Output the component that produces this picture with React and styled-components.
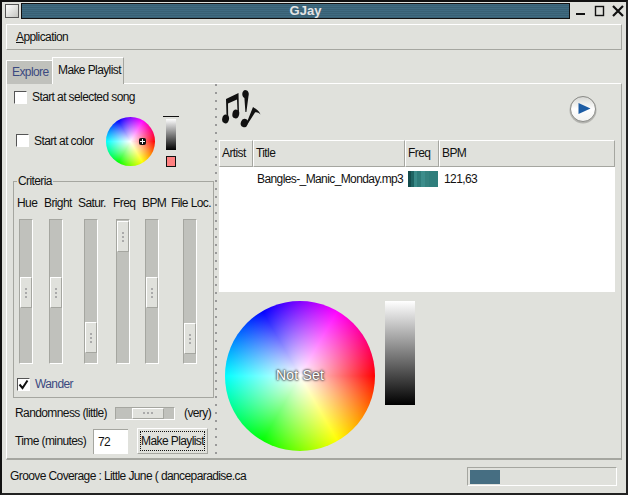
import React from 'react'
import styled, { createGlobalStyle } from 'styled-components'

const Global = createGlobalStyle`
  html, body {
    margin: 0;
    padding: 0;
    background: #e0e1dc;
  }
  body {
    font-family: "Liberation Sans", Arial, sans-serif;
    font-size: 12px;
    letter-spacing: -0.6px;
    color: #111;
  }
`

const Win = styled.div`
  width: 628px;
  height: 495px;
  box-sizing: border-box;
  border-top: 2px solid #111;
  border-left: 2px solid #111;
  border-right: 2px solid #222;
  border-bottom: 2px solid #222;
  background: #e0e1dc;
  display: flex;
  flex-direction: column;
  overflow: hidden;
`

const TitleBar = styled.div`
  height: 17px;
  display: flex;
  align-items: center;
  padding-left: 3px;
  flex: none;
`

const WinMenuBtn = styled.div`
  width: 12px;
  height: 12px;
  background: linear-gradient(135deg, #fff, #c4c5c0);
  border: 1px solid #555;
`

const TitleText = styled.div`
  flex: none;
  width: 549px;
  height: 16px;
  margin-left: 2px;
  padding-left: 20px;
  box-sizing: border-box;
  border: 1px solid #111;
  background: repeating-linear-gradient(180deg, #3f6a80 0 1px, #386074 1px 2px);
  color: #e4e4e4;
  font-weight: bold;
  font-size: 13px;
  letter-spacing: 0;
  line-height: 14px;
  text-align: center;
`

const WinBtns = styled.div`
  display: flex;
  align-items: center;
  margin-left: 5px;
  gap: 7px;
`

const Menubar = styled.div`
  flex: none;
  margin: 5px 4px 0 4px;
  height: 26px;
  box-sizing: border-box;
  border-top: 1px solid #fff;
  border-left: 1px solid #fff;
  border-right: 1px solid #a5a6a0;
  border-bottom: 1px solid #a5a6a0;
  padding-left: 9px;
  line-height: 24px;
  u { text-decoration: underline; }
`

const Tabs = styled.div`
  flex: none;
  display: flex;
  align-items: flex-end;
  height: 27px;
  margin: 7px 4px -1px 4px;
  position: relative;
  z-index: 1;
`

const Tab = styled.div`
  box-sizing: border-box;
  width: ${p => p.$w}px;
  height: ${p => (p.$active ? 27 : 24)}px;
  padding-left: 5px;
  line-height: ${p => (p.$active ? 24 : 23)}px;
  background: ${p => (p.$active ? '#e0e1dc' : '#c0c1bc')};
  color: ${p => (p.$active ? '#111' : '#3b4a80')};
  border-top: 1px solid #fff;
  border-left: 1px solid #fff;
  border-right: ${p => (p.$active ? '1px solid #a5a6a0' : 'none')};
`

const Panel = styled.div`
  flex: none;
  height: 377px;
  margin: 0 4px;
  box-sizing: border-box;
  border-top: 1px solid #fff;
  border-left: 1px solid #fff;
  border-right: 1px solid #a5a6a0;
  border-bottom: 2px solid #a5a6a0;
  display: flex;
`

const Left = styled.div`
  width: 206px;
  flex: none;
  padding: 0 0 0 1px;
  box-sizing: border-box;
  display: flex;
  flex-direction: column;
`

const CheckRow = styled.div`
  display: flex;
  align-items: center;
  gap: 5px;
  height: ${p => p.$h || 20}px;
  margin-left: ${p => p.$ml || 6}px;
  margin-top: ${p => p.$mt || 0}px;
  color: ${p => p.$color || '#111'};
`

const Check = styled.div`
  width: 11px;
  height: 11px;
  background: #fff;
  border-top: 1px solid #555;
  border-left: 1px solid #555;
  border-right: 1px solid #fff;
  border-bottom: 1px solid #fff;
  display: flex;
  align-items: center;
  justify-content: center;
  flex: none;
`

const ColorRow = styled.div`
  display: flex;
  align-items: flex-start;
  margin-top: 7px;
  height: 53px;
`

const ColorLabel = styled.div`
  width: 98px;
  flex: none;
  height: 47px;
  display: flex;
  align-items: center;
`

const Wheel = styled.div`
  position: relative;
  flex: none;
  width: ${p => p.$size}px;
  height: ${p => p.$size}px;
  border-radius: 50%;
  background:
    radial-gradient(circle closest-side, #fff 0%, rgba(255, 255, 255, 0) 100%),
    conic-gradient(from 90deg, #f00, #ff0, #0f0, #0ff, #00f, #f0f, #f00);
  display: flex;
  align-items: center;
  justify-content: center;
`

const Marker = styled.div`
  position: absolute;
  left: 33px;
  top: 21px;
  width: 7px;
  height: 7px;
  border-radius: 2px;
  background:
    linear-gradient(#fff, #fff) center / 5px 1px no-repeat,
    linear-gradient(#fff, #fff) center / 1px 5px no-repeat,
    #111;
`

const ValueCol = styled.div`
  margin: -1px 0 0 8px;
  width: 16px;
  display: flex;
  flex-direction: column;
  align-items: center;
`

const ValueLine = styled.div`
  width: 16px;
  height: 1px;
  background: #111;
  margin-bottom: 2px;
`

const ValueBar = styled.div`
  width: ${p => p.$w}px;
  height: ${p => p.$h}px;
  background: linear-gradient(180deg, #fff, #000);
`

const Swatch = styled.div`
  width: 8px;
  height: 9px;
  margin-top: 6px;
  background: #ff8080;
  border: 1px solid #111;
`

const Group = styled.fieldset`
  margin: 5px 0 0 5px;
  padding: 0;
  width: 201px;
  height: 223px;
  box-sizing: border-box;
  border: 1px solid #a5a6a0;
  min-width: 0;
  legend {
    margin-left: 3px;
    padding: 0 1px;
    line-height: 13px;
  }
`

const SliderHeads = styled.div`
  display: flex;
  margin: 7px 0 0 3px;
  height: 16px;
  line-height: 16px;
`

const Head = styled.div`
  width: ${p => p.$w}px;
  flex: none;
  white-space: nowrap;
`

const Sliders = styled.div`
  display: flex;
  margin-top: 8px;
  height: 145px;
`

const Track = styled.div`
  flex: none;
  width: 14px;
  height: 145px;
  margin-left: ${p => p.$ml}px;
  box-sizing: border-box;
  background: #c0c1bc;
  border-top: 1px solid #a5a6a0;
  border-left: 1px solid #a5a6a0;
  border-right: 1px solid #fff;
  border-bottom: 1px solid #fff;
  padding-top: ${p => p.$top}px;
`

const Thumb = styled.div`
  width: 12px;
  height: 31px;
  box-sizing: border-box;
  background: #e0e1dc;
  border-top: 1px solid #fff;
  border-left: 1px solid #fff;
  border-bottom: 1px solid #a5a6a0;
  border-right: 1px solid #a5a6a0;
  display: flex;
  flex-direction: column;
  align-items: center;
  justify-content: center;
  gap: 2px;
  i {
    display: block;
    width: 2px;
    height: 2px;
    background: #aaa;
  }
`

const HThumb = styled.div`
  width: 32px;
  height: 11px;
  margin-left: 16px;
  box-sizing: border-box;
  background: #e0e1dc;
  border-top: 1px solid #fff;
  border-left: 1px solid #fff;
  border-bottom: 1px solid #a5a6a0;
  border-right: 1px solid #a5a6a0;
  display: flex;
  align-items: center;
  justify-content: center;
  gap: 2px;
  i {
    display: block;
    width: 2px;
    height: 2px;
    background: #aaa;
  }
`

const HTrack = styled.div`
  width: 60px;
  height: 13px;
  box-sizing: border-box;
  background: #c0c1bc;
  border-top: 1px solid #a5a6a0;
  border-left: 1px solid #a5a6a0;
  border-right: 1px solid #fff;
  border-bottom: 1px solid #fff;
  flex: none;
`

const RandomRow = styled.div`
  display: flex;
  align-items: center;
  margin: 6px 0 0 7px;
  height: 18px;
`

const RowLabel = styled.div`
  width: ${p => p.$w}px;
  flex: none;
  white-space: nowrap;
`

const VeryLabel = styled.div`
  margin-left: 9px;
`

const TimeRow = styled.div`
  display: flex;
  align-items: center;
  margin: 6px 0 0 7px;
  height: 26px;
`

const TimeInput = styled.div`
  width: 35px;
  height: 25px;
  box-sizing: border-box;
  background: #fff;
  border-top: 1px solid #a5a6a0;
  border-left: 1px solid #a5a6a0;
  padding-left: 4px;
  line-height: 24px;
`

const PlaylistBtn = styled.div`
  margin-left: 9px;
  width: 71px;
  height: 26px;
  box-sizing: border-box;
  border-top: 1px solid #fff;
  border-left: 1px solid #fff;
  border-right: 1px solid #a5a6a0;
  border-bottom: 1px solid #a5a6a0;
  padding: 2px;
  span {
    display: block;
    height: 20px;
    line-height: 18px;
    text-align: center;
    border: 1px dotted #111;
    box-sizing: border-box;
    white-space: nowrap;
  }
`

const Handle = styled.div`
  width: 6px;
  flex: none;
  background: linear-gradient(180deg, #999 0 2px, transparent 2px) center top / 2px 8px repeat-y;
`

const Right = styled.div`
  flex: 1;
  display: flex;
  flex-direction: column;
  min-width: 0;
`

const TopRow = styled.div`
  height: 56px;
  flex: none;
  display: flex;
  justify-content: space-between;
  padding: 5px 23px 0 3px;
  box-sizing: border-box;
`

const PlayWrap = styled.div`
  margin-top: 5px;
`

const Table = styled.div`
  width: 396px;
  flex: none;
`

const THead = styled.div`
  display: flex;
  height: 27px;
`

const Th = styled.div`
  width: ${p => p.$w}px;
  flex: ${p => (p.$grow ? 1 : 'none')};
  box-sizing: border-box;
  border-top: 1px solid #fff;
  border-left: 1px solid #fff;
  border-right: 1px solid #a5a6a0;
  border-bottom: 1px solid #a5a6a0;
  padding-left: 2px;
  line-height: 25px;
`

const TBody = styled.div`
  height: 125px;
  background: #fff;
`

const Tr = styled.div`
  display: flex;
  align-items: center;
  height: 24px;
`

const Td = styled.div`
  width: ${p => p.$w}px;
  flex: none;
  padding-left: ${p => p.$pl || 0}px;
  box-sizing: border-box;
  white-space: nowrap;
`

const FreqBar = styled.div`
  width: 30px;
  height: 16px;
  background: linear-gradient(
    90deg,
    #144c4c 0 10%,
    #1f6463 10% 20%,
    #3a8a88 20% 30%,
    #2f7c7a 30% 42%,
    #3c8d8b 42% 55%,
    #35827f 55% 70%,
    #2f7e7c 70% 100%
  );
`

const Bottom = styled.div`
  display: flex;
  align-items: flex-start;
  padding: 9px 0 0 6px;
`

const Centered = styled.div`
  color: #fff;
  font-size: 14px;
  letter-spacing: 0.2px;
  padding-bottom: 2px;
  text-shadow: 0 0 2px #444, 0 0 2px #444, 0 0 3px #555;
`

const BigValue = styled.div`
  margin-left: 10px;
`

const StatusBar = styled.div`
  flex: 1;
  display: flex;
  align-items: center;
  justify-content: space-between;
  padding: 0 9px 1px 8px;
`

const Progress = styled.div`
  width: 150px;
  height: 19px;
  box-sizing: border-box;
  border-top: 1px solid #a5a6a0;
  border-left: 1px solid #a5a6a0;
  border-right: 1px solid #fff;
  border-bottom: 1px solid #fff;
  padding: 2px;
`

const ProgressFill = styled.div`
  height: 14px;
  width: 30px;
  background: #466e82;
`

const Grip = ({ n = 3 }) => (
  <>
    {Array.from({ length: n }).map((_, i) => <i key={i} />)}
  </>
)

const sliders = [
  { ml: 5, top: 57 },
  { ml: 16, top: 57 },
  { ml: 21, top: 102 },
  { ml: 18, top: 1 },
  { ml: 15, top: 57 },
  { ml: 24, top: 103 },
]

const Notes = () => (
  <svg width="40" height="40" viewBox="0 0 40 40" fill="#111">
    <ellipse cx="3.6" cy="30" rx="3.4" ry="4.4" transform="rotate(12 3.6 30)" />
    <ellipse cx="13.8" cy="25" rx="3.4" ry="4.4" transform="rotate(12 13.8 25)" />
    <path d="M4 10 L16.5 4 L17 25 L15.6 25 L15 10.5 L6 14.5 L6.2 30 L4.6 30 Z" />
    <path d="M23 1 C26 1 27.5 4 26.5 7 L24.4 23 L23.4 23 L22.4 9 C19.5 7.5 19.5 2 23 1 Z" />
    <ellipse cx="22.4" cy="34" rx="3.6" ry="4.2" transform="rotate(20 22.4 34)" />
    <path d="M24.6 34 L31 18 C33 19.5 37 21 38.5 25.5 C36.5 23.5 34.5 23 33 23.5 L26 34.5 Z" />
  </svg>
)

const PlayIcon = () => (
  <svg width="30" height="30" viewBox="0 0 30 30">
    <defs>
      <linearGradient id="playBg" x1="0" y1="0" x2="0" y2="1">
        <stop offset="0" stopColor="#d5d6d2" />
        <stop offset="0.5" stopColor="#ffffff" />
        <stop offset="1" stopColor="#f2f2f0" />
      </linearGradient>
    </defs>
    <circle cx="15" cy="16" r="13.5" fill="#8f908c" opacity="0.55" />
    <circle cx="15" cy="15" r="12.5" fill="url(#playBg)" stroke="#8b8c88" strokeWidth="1" />
    <path d="M10.5 9 L22.5 14.5 L10.5 20 Z" fill="#1c5ca4" />
  </svg>
)

const WinIcons = () => (
  <>
    <svg width="12" height="14" viewBox="0 0 12 14"><rect x="1" y="9" width="9" height="2" fill="#111" /></svg>
    <svg width="11" height="14" viewBox="0 0 11 14"><rect x="1.5" y="2.5" width="8" height="9" fill="none" stroke="#111" strokeWidth="1.4" /></svg>
    <svg width="12" height="14" viewBox="0 0 12 14"><path d="M1 2 L11 12 M11 2 L1 12" stroke="#111" strokeWidth="2.2" /></svg>
  </>
)

export default function App() {
  return (
    <>
      <Global />
      <Win>
        <TitleBar>
          <WinMenuBtn />
          <TitleText>GJay</TitleText>
          <WinBtns><WinIcons /></WinBtns>
        </TitleBar>
        <Menubar><u>A</u>pplication</Menubar>
        <Tabs>
          <Tab $w={46}>Explore</Tab>
          <Tab $w={72} $active>Make Playlist</Tab>
        </Tabs>
        <Panel>
          <Left>
            <CheckRow $h={26}>
              <Check />
              Start at selected song
            </CheckRow>
            <ColorRow>
              <ColorLabel>
                <CheckRow $ml={8}>
                  <Check />
                  Start at color
                </CheckRow>
              </ColorLabel>
              <Wheel $size={49}>
                <Marker />
              </Wheel>
              <ValueCol>
                <ValueLine />
                <ValueBar $w={10} $h={31} />
                <Swatch />
              </ValueCol>
            </ColorRow>
            <Group>
              <legend>Criteria</legend>
              <SliderHeads>
                <Head $w={27}>Hue</Head>
                <Head $w={34}>Bright</Head>
                <Head $w={35}>Satur.</Head>
                <Head $w={29}>Freq</Head>
                <Head $w={29}>BPM</Head>
                <Head $w={40}>File Loc.</Head>
              </SliderHeads>
              <Sliders>
                {sliders.map((s, i) => (
                  <Track key={i} $ml={s.ml} $top={s.top}>
                    <Thumb><Grip /></Thumb>
                  </Track>
                ))}
              </Sliders>
              <CheckRow $h={24} $color="#3b4a80" $ml={3} $mt={8}>
                <Check>
                  <svg width="11" height="11" viewBox="0 0 11 11">
                    <path d="M1.5 5.5 L4.5 9 L9.5 1.5" fill="none" stroke="#111" strokeWidth="2" />
                  </svg>
                </Check>
                Wander
              </CheckRow>
            </Group>
            <RandomRow>
              <RowLabel $w={100}>Randomness (little)</RowLabel>
              <HTrack>
                <HThumb><Grip /></HThumb>
              </HTrack>
              <VeryLabel>(very)</VeryLabel>
            </RandomRow>
            <TimeRow>
              <RowLabel $w={78}>Time (minutes)</RowLabel>
              <TimeInput>72</TimeInput>
              <PlaylistBtn><span>Make Playlist</span></PlaylistBtn>
            </TimeRow>
          </Left>
          <Handle />
          <Right>
            <TopRow>
              <Notes />
              <PlayWrap><PlayIcon /></PlayWrap>
            </TopRow>
            <Table>
              <THead>
                <Th $w={34}>Artist</Th>
                <Th $w={152}>Title</Th>
                <Th $w={34}>Freq</Th>
                <Th $grow>BPM</Th>
              </THead>
              <TBody>
                <Tr>
                  <Td $w={38} />
                  <Td $w={151}>Bangles-_Manic_Monday.mp3</Td>
                  <Td $w={31}><FreqBar /></Td>
                  <Td $w={60} $pl={5}>121,63</Td>
                </Tr>
              </TBody>
            </Table>
            <Bottom>
              <Wheel $size={150}>
                <Centered>Not Set</Centered>
              </Wheel>
              <BigValue>
                <ValueBar $w={30} $h={104} />
              </BigValue>
            </Bottom>
          </Right>
        </Panel>
        <StatusBar>
          <span>Groove Coverage : Little June ( danceparadise.ca</span>
          <Progress><ProgressFill /></Progress>
        </StatusBar>
      </Win>
    </>
  )
}
